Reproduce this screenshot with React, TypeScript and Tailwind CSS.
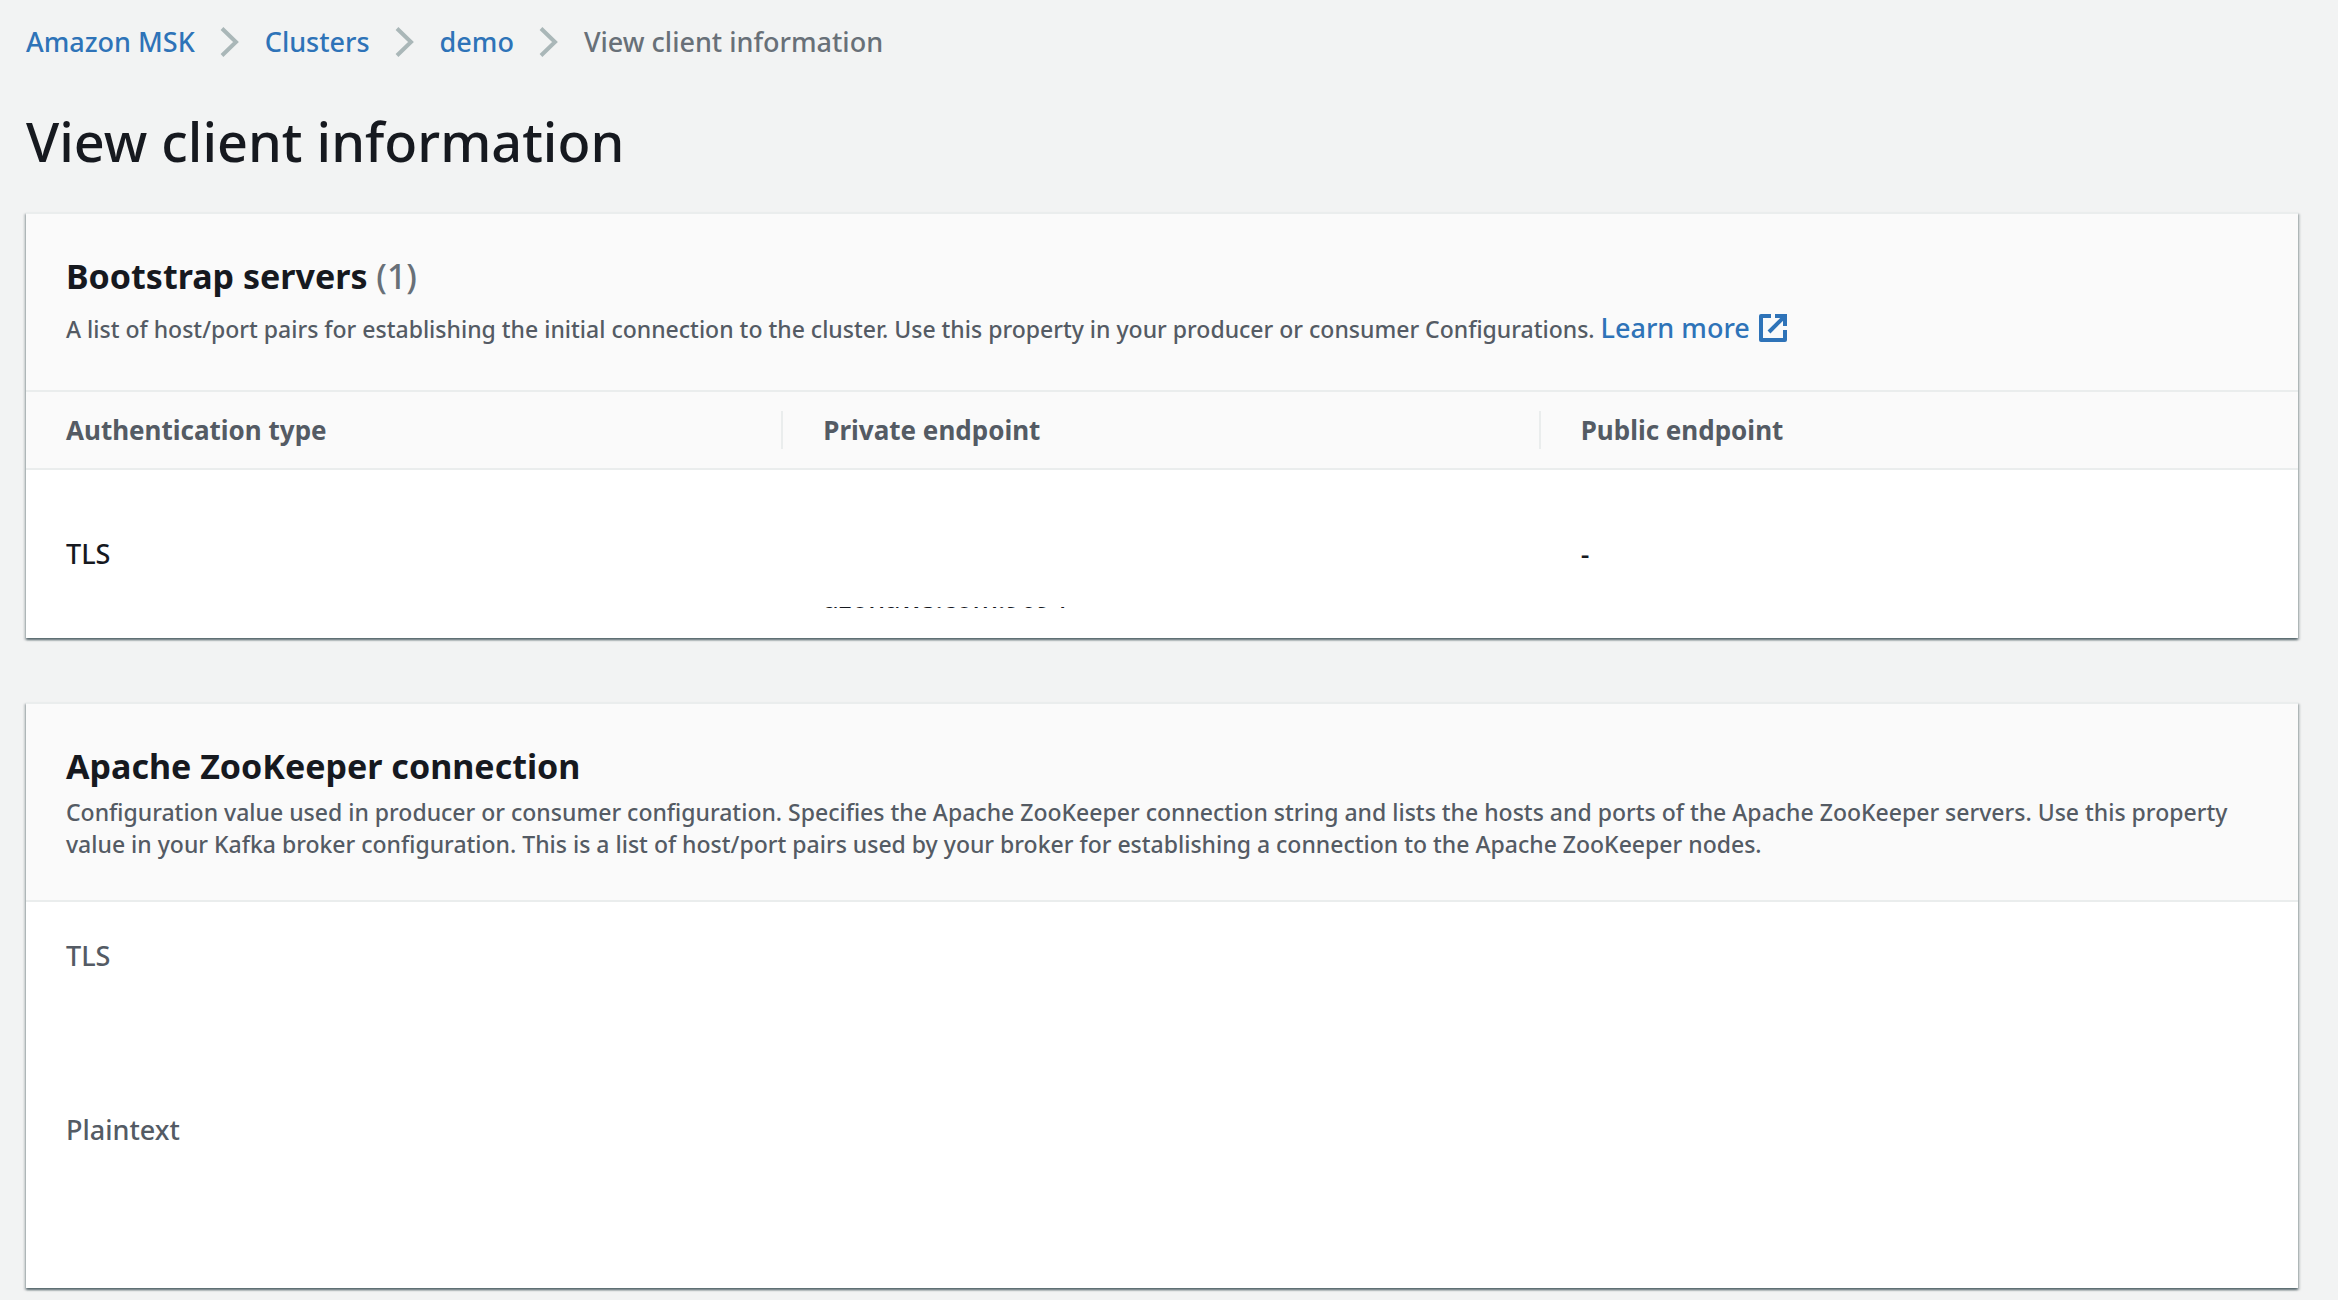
import React from "react";

const crumbs = ["Amazon MSK", "Clusters", "demo"];

function Chevron() {
  return (
    <svg className="mx-[25px] h-8 w-5 shrink-0" viewBox="0 0 20 32" fill="none" stroke="#aab7b8" strokeWidth="4" aria-hidden="true">
      <path d="M2 2.5 L16 16 L2 29.5" />
    </svg>
  );
}

function ExternalIcon() {
  return (
    <svg className="ml-0.5 inline-block size-7 align-[-4px]" viewBox="0 0 28 28" fill="none" stroke="currentColor" strokeWidth="4" aria-hidden="true">
      <path d="M12 2H2v24h24V16" strokeLinejoin="round" />
      <path d="M16 2h10v10" />
      <path d="M26 2L10 18" />
    </svg>
  );
}

const panel =
  "border-t-2 border-[#eaeded] bg-white shadow-[0_2px_2px_0_rgba(0,28,36,0.5),2px_2px_2px_0_rgba(0,28,36,0.15),-2px_2px_2px_0_rgba(0,28,36,0.15)]";

export default function App() {
  return (
    <div className="min-h-screen bg-[#f2f3f3] pr-10 pl-[26px] font-['Noto_Sans',sans-serif] text-[27px] leading-[44px] font-medium text-[#16191f]">
      <nav aria-label="Breadcrumb" className="pt-5">
        <ol className="flex items-center">
          {crumbs.map((c) => (
            <li key={c} className="flex items-center">
              <a href="#" className="text-[#2e73b8]">{c}</a>
              <Chevron />
            </li>
          ))}
          <li aria-current="page" className="text-[#687078]">View client information</li>
        </ol>
      </nav>

      <h1 className="mt-[43px] mb-[37px] text-[54px] leading-[68px]">View client information</h1>

      <section className={panel}>
        <header className="h-[176px] bg-[#fafafa] px-10 pt-10">
          <h2 className="text-[34px] leading-[44px] font-bold">
            Bootstrap servers <span className="font-medium text-[#687078]">(1)</span>
          </h2>
          <p className="mt-2 text-[23px] leading-[44px] text-[#545b64]">
            A list of host/port pairs for establishing the initial connection to the cluster. Use this property in your producer or consumer Configurations.{" "}
            <a href="#" className="text-[27px] text-[#2e73b8]">Learn more <ExternalIcon /></a>
          </p>
        </header>
        <table className="w-full table-fixed border-separate border-spacing-0 text-left">
          <thead className="bg-[#fafafa] text-[#545b64]">
            <tr>
              {["Authentication type", "Private endpoint", "Public endpoint"].map((h) => (
                <th key={h} scope="col" className="group h-20 border-y-2 border-[#eaeded] p-0 text-[26px] font-bold">
                  <div className="h-[38px] border-r-2 border-[#eaeded] px-10 leading-[38px] group-last:border-r-0">{h}</div>
                </th>
              ))}
            </tr>
          </thead>
          <tbody>
            <tr className="h-[168px]">
              <td className="px-10">TLS</td>
              <td className="px-10 pb-[29px] align-bottom">
                <div className="flex h-0.5 items-end overflow-hidden">
                  <span className="block leading-[22px]">azonaws.com:9094</span>
                </div>
              </td>
              <td className="px-10">-</td>
            </tr>
          </tbody>
        </table>
      </section>

      <section className={`mt-16 ${panel}`}>
        <header className="h-[198px] border-b-2 border-[#eaeded] bg-[#fafafa] px-10 pt-10">
          <h2 className="text-[34px] leading-[44px] font-bold">Apache ZooKeeper connection</h2>
          <p className="mt-2 text-[23px] leading-8 text-[#545b64]">
            Configuration value used in producer or consumer configuration. Specifies the Apache ZooKeeper connection string and lists the hosts and ports of the Apache ZooKeeper servers. Use this property value in your Kafka broker configuration. This is a list of host/port pairs used by your broker for establishing a connection to the Apache ZooKeeper nodes.
          </p>
        </header>
        <dl className="px-10 pt-8 text-[#545b64]">
          <dt>TLS</dt>
          <dd className="h-[130px]" />
          <dt>Plaintext</dt>
          <dd className="h-[136px]" />
        </dl>
      </section>
    </div>
  );
}
